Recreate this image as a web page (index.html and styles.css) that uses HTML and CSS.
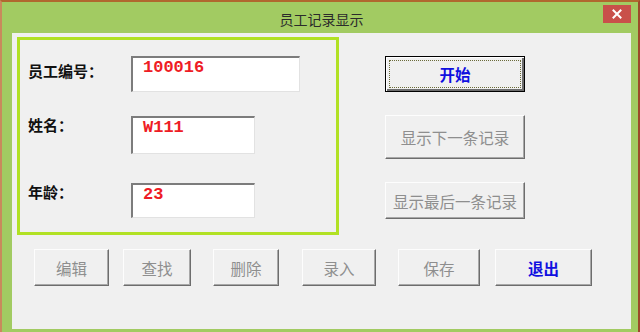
FILE: index.html
```html
<!DOCTYPE html>
<html lang="zh-CN">
<head>
  <meta charset="UTF-8" />
  <title>员工记录显示</title>
  <link rel="stylesheet" href="styles.css">
</head>
<body>

  <div class="window">
    <div class="titlebar">
      <span class="title">员工记录显示</span>
      <button class="close" aria-label="关闭">
        <svg width="10" height="10" viewBox="0 0 10 10">
          <path d="M1.5 1.5 L8.5 8.5 M8.5 1.5 L1.5 8.5" stroke="#fff" stroke-width="2" stroke-linecap="square"/>
        </svg>
      </button>
    </div>

    <div class="client">
      <div class="top">
        <div class="frame">
          <div class="row row-id">
            <span class="label">员工编号：</span>
            <div class="field field-wide">100016</div>
          </div>
          <div class="row row-name">
            <span class="label">姓名：</span>
            <div class="field field-name">W111</div>
          </div>
          <div class="row row-age">
            <span class="label">年龄：</span>
            <div class="field field-age">23</div>
          </div>
        </div>

        <div class="side">
          <button class="btn btn-default btn-start">开始</button>
          <button class="btn btn-next" disabled>显示下一条记录</button>
          <button class="btn btn-last" disabled>显示最后一条记录</button>
        </div>
      </div>

      <div class="actions">
        <button class="btn btn-edit" disabled>编辑</button>
        <button class="btn btn-find" disabled>查找</button>
        <button class="btn btn-delete" disabled>删除</button>
        <button class="btn btn-input" disabled>录入</button>
        <button class="btn btn-save" disabled>保存</button>
        <button class="btn btn-exit">退出</button>
      </div>
    </div>
  </div>

</body>
</html>
```

FILE: styles.css
```css
body {
  margin: 0;
  padding: 0;
  background: #f0f0f0;
  font-family: 'Noto Sans CJK SC', 'Noto Sans', sans-serif;
}

/* Window frame */
.window {
  width: 640px;
  height: 332px;
  box-sizing: border-box;
  background: #a2cb62;
  border-top: 2px solid #b0682e;
  border-left: 2px solid #c98a5c;
  border-right: 2px solid #9c4a2a;
  padding: 0 7px 3px 10px;
  display: flex;
  flex-direction: column;
}

.titlebar {
  height: 31px;
  display: grid;
  grid-template-columns: 1fr auto 1fr;
  align-items: start;
}

.title {
  grid-column: 2;
  margin-top: 9px;
  font-size: 14px;
  line-height: 16px;
  color: #2b2b2b;
}

.close {
  grid-column: 3;
  justify-self: end;
  margin-top: 3px;
  width: 28px;
  height: 18px;
  padding: 0;
  border: none;
  background: #c9504a;
  display: flex;
  align-items: center;
  justify-content: center;
}

.client {
  flex: 1;
  background: #f0f0f0;
  padding: 4px 0 0 5px;
}

.top {
  display: flex;
  align-items: flex-start;
}

/* Lime group box */
.frame {
  width: 322px;
  box-sizing: border-box;
  border: 3px solid #b1e124;
  padding: 16px 0 14px 8px;
}

.row {
  display: flex;
  align-items: flex-start;
}

.row-name {
  margin-top: 24px;
}

.row-age {
  margin-top: 29px;
}

.label {
  width: 103px;
  font-size: 15px;
  line-height: 16px;
  font-weight: bold;
  color: #111;
}

.row-id .label {
  margin-top: 7px;
}

.row-name .label,
.row-age .label {
  margin-top: 1px;
}

.field {
  box-sizing: border-box;
  background: #fff;
  border-top: 2px solid #7c7c7c;
  border-left: 2px solid #7c7c7c;
  border-right: 1px solid #e2e2e2;
  border-bottom: 1px solid #e2e2e2;
  padding: 1px 10px 0 10px;
  font-family: 'Liberation Mono', monospace;
  font-size: 17px;
  line-height: 18px;
  font-weight: bold;
  color: #ee1c25;
}

.field-wide {
  width: 169px;
  height: 36px;
}

.field-name {
  width: 124px;
  height: 38px;
}

.field-age {
  width: 124px;
  height: 35px;
}

/* Buttons */
.btn {
  box-sizing: border-box;
  height: 37px;
  padding: 0;
  background: #f0f0f0;
  border: 1px solid;
  border-color: #fdfdfd #6d6d6d #6d6d6d #fdfdfd;
  box-shadow: inset -1px -1px #a8a8a8;
  font-family: 'Noto Sans CJK SC', 'Noto Sans', sans-serif;
  font-size: 15.5px;
  color: #8e8e8e;
}

.btn-start,
.btn-exit {
  color: #1010e0;
  font-weight: bold;
}

.btn-default {
  border-color: #000;
  box-shadow: inset 1px 1px #fff, inset -2px -2px #6d6d6d;
  outline: 1px dotted #6b6b3a;
  outline-offset: -5px;
}

.side {
  margin-left: 46px;
  display: flex;
  flex-direction: column;
}

.side .btn {
  width: 140px;
}

.btn-start {
  margin-top: 19px;
  height: 36px;
}

.btn-next {
  margin-top: 23px;
  height: 44px;
}

.btn-last {
  margin-top: 23px;
  height: 37px;
}

.actions {
  display: flex;
  margin: 14px 0 0 17px;
}

.btn-edit { width: 75px; }
.btn-find { width: 68px; margin-left: 14px; }
.btn-delete { width: 66px; margin-left: 22px; }
.btn-input { width: 74px; margin-left: 23px; }
.btn-save { width: 82px; margin-left: 22px; }
.btn-exit { width: 97px; margin-left: 15px; }
```
